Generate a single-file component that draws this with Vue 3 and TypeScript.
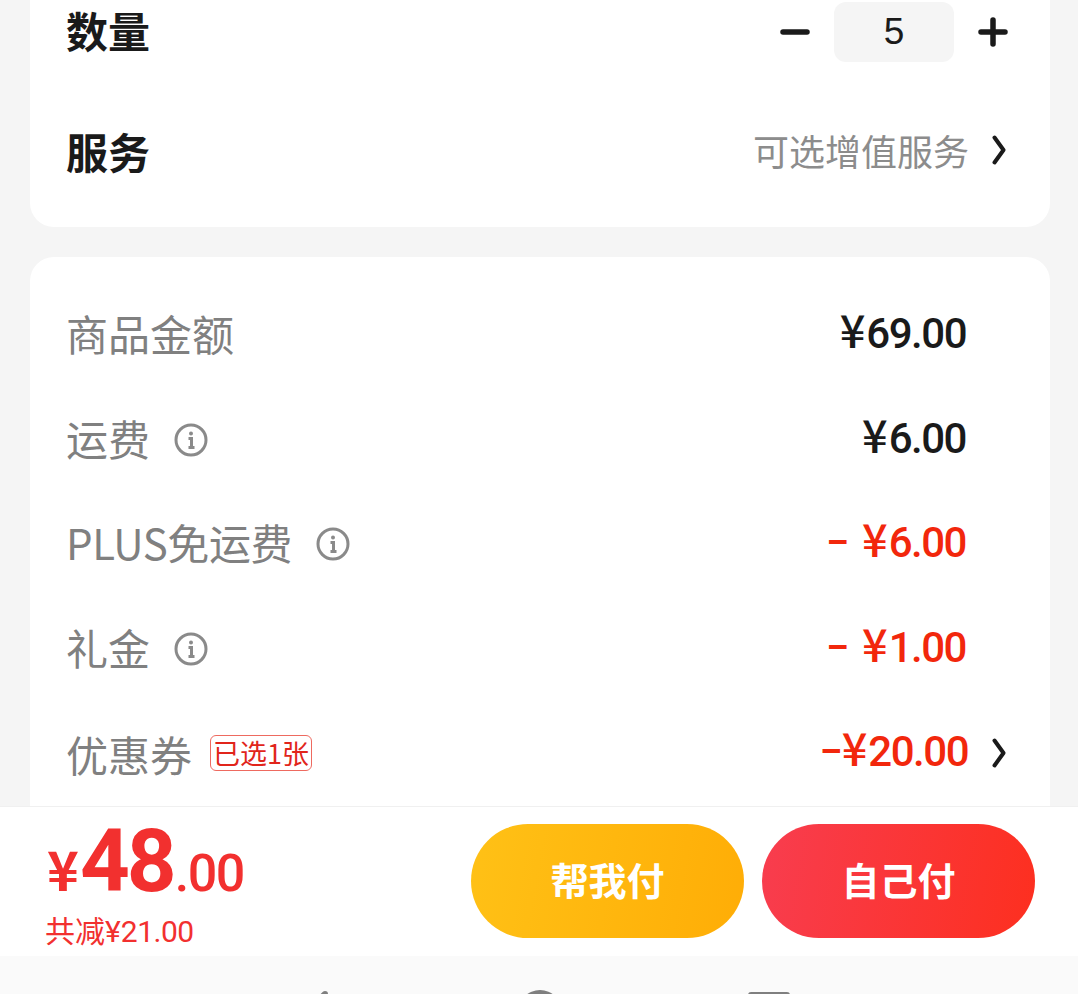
<script setup lang="ts">
interface FeeRow {
  label: string
  value: string
  info?: boolean
  discount?: boolean
  compact?: boolean
}

const fees: FeeRow[] = [
  { label: '商品金额', value: '69.00' },
  { label: '运费', value: '6.00', info: true },
  { label: 'PLUS免运费', value: '6.00', info: true, discount: true, compact: true },
  { label: '礼金', value: '1.00', info: true, discount: true },
]
</script>

<template>
  <div class="page">
    <div class="scroll">
      <section class="card card-top">
        <div class="row-qty">
          <span class="title">数量</span>
          <div class="stepper">
            <svg class="step-icon" viewBox="0 0 30 30"><path d="M3 15H27" /></svg>
            <div class="count">5</div>
            <svg class="step-icon" viewBox="0 0 30 30"><path d="M3 15H27M15 3V27" /></svg>
          </div>
        </div>
        <div class="row-service">
          <span class="title">服务</span>
          <div class="service-right">
            <span class="hint">可选增值服务</span>
            <svg class="chevron" viewBox="0 0 14 30"><path d="M2.5 2.5L11.5 15L2.5 27.5" /></svg>
          </div>
        </div>
      </section>

      <section class="card card-fees">
        <div v-for="fee in fees" :key="fee.label" class="fee-row">
          <div class="fee-left">
            <span class="label" :class="{ compact: fee.compact }">{{ fee.label }}</span>
            <svg v-if="fee.info" class="info" viewBox="0 0 34 34">
              <circle cx="17" cy="17" r="15" />
              <circle class="dot" cx="17" cy="10.5" r="2" />
              <path d="M14.5 15.5H17.5V24M14.5 24.5H20.5" />
            </svg>
          </div>
          <span class="amount" :class="{ discount: fee.discount }">
            <span v-if="fee.discount" class="sign spaced">−</span><span class="amount-yen">¥</span>{{ fee.value }}
          </span>
        </div>
        <div class="fee-row coupon-row">
          <div class="fee-left">
            <span class="label">优惠券</span>
            <span class="badge">已选1张</span>
          </div>
          <div class="coupon-right">
            <span class="amount discount"><span class="sign">−</span><span class="amount-yen">¥</span>20.00</span>
            <svg class="chevron" viewBox="0 0 14 30"><path d="M2.5 2.5L11.5 15L2.5 27.5" /></svg>
          </div>
        </div>
      </section>
    </div>

    <footer class="pay-bar">
      <div class="total">
        <div class="price">
          <span class="yen">¥</span><span class="int">48</span><span class="dec">.00</span>
        </div>
        <div class="saved">共减¥<span class="saved-num">21.00</span></div>
      </div>
      <div class="actions">
        <button class="btn btn-yellow"><span>帮我付</span></button>
        <button class="btn btn-red"><span>自己付</span></button>
      </div>
    </footer>

    <nav class="sys-nav">
      <svg class="nav-back" viewBox="0 0 44 44"><path d="M25 4L6 22L25 40Z" /></svg>
      <svg class="nav-home" viewBox="0 0 44 44"><circle cx="22" cy="22" r="22" /></svg>
      <svg class="nav-recent" viewBox="0 0 44 44"><rect x="1" y="2" width="42" height="42" rx="3" /></svg>
    </nav>
  </div>
</template>

<style>
html,
body {
  margin: 0;
  overflow: hidden;
}
</style>

<style scoped>
.page {
  width: 1078px;
  height: 994px;
  display: flex;
  flex-direction: column;
  overflow: hidden;
  background: #f5f5f5;
  font-family: "Noto Sans CJK SC", "Noto Sans", sans-serif;
}

.scroll {
  flex: 1;
  min-height: 0;
  overflow: hidden;
  padding: 0 28px 0 30px;
  display: flex;
  flex-direction: column;
  gap: 30px;
}

.card {
  background: #fff;
  flex-shrink: 0;
}

.card-top {
  height: 227px;
  padding: 0 42px 0 36px;
  box-sizing: border-box;
  border-radius: 0 0 24px 24px;
}

.row-qty {
  height: 64px;
  display: flex;
  align-items: center;
  justify-content: space-between;
}

.row-service {
  height: 66px;
  margin-top: 56px;
  display: flex;
  align-items: center;
  justify-content: space-between;
}

.title {
  font-size: 42px;
  font-weight: 700;
  color: #1a1a1a;
  padding-bottom: 6px;
}

.stepper {
  display: flex;
  align-items: center;
  gap: 24px;
}

.step-icon {
  width: 30px;
  height: 30px;
  fill: none;
  stroke: #1a1a1a;
  stroke-width: 5.5;
  stroke-linecap: round;
}

.count {
  width: 120px;
  height: 60px;
  border-radius: 12px;
  background: #f5f5f5;
  display: flex;
  align-items: center;
  justify-content: center;
  font-family: "Liberation Sans", Arial, sans-serif;
  font-size: 37px;
  color: #1a1a1a;
}

.service-right {
  display: flex;
  align-items: center;
  gap: 23px;
  padding-bottom: 6px;
}

.hint {
  font-size: 36px;
  color: #8c8c8c;
}

.chevron {
  width: 14px;
  height: 30px;
  margin-right: 2px;
  fill: none;
  stroke: #1a1a1a;
  stroke-width: 4;
  stroke-linecap: round;
  stroke-linejoin: round;
}

.card-fees {
  padding: 26px 42px 0 36px;
  border-radius: 24px 24px 0 0;
}

.fee-row {
  height: 104.5px;
  display: flex;
  align-items: center;
  justify-content: space-between;
  padding-right: 42px;
}

.coupon-row {
  padding-right: 0;
}

.fee-left {
  display: flex;
  align-items: center;
}

.label {
  font-size: 42px;
  color: #808080;
  padding-bottom: 5px;
}

.label.compact {
  letter-spacing: -0.4px;
}

.coupon-row .label {
  padding-bottom: 0;
}

.info {
  width: 34px;
  height: 34px;
  margin-left: 24px;
  fill: none;
  stroke: #8a8a8a;
  stroke-width: 3;
}

.info .dot {
  fill: #8a8a8a;
  stroke: none;
}

.amount {
  font-family: Roboto, sans-serif;
  font-size: 42px;
  line-height: 48px;
  font-weight: 500;
  letter-spacing: -1.5px;
  color: #1a1a1a;
  padding-bottom: 6px;
}

.amount.discount {
  color: #f2270c;
}

.amount-yen {
  font-family: "Noto Sans CJK SC", sans-serif;
  font-size: 45px;
  line-height: 1;
  letter-spacing: 0;
  margin-right: 1px;
}

.sign.spaced {
  margin-right: 14px;
}

.badge {
  margin-left: 18px;
  height: 36px;
  padding: 0 2px;
  box-sizing: border-box;
  border: 1px solid #ee6a60;
  border-radius: 6px;
  font-size: 27px;
  line-height: 33px;
  color: #e1251b;
}

.coupon-right {
  display: flex;
  align-items: center;
  gap: 24px;
}

.pay-bar {
  height: 150px;
  box-sizing: border-box;
  flex-shrink: 0;
  background: #fff;
  border-top: 1px solid #f0f0f0;
  padding: 0 43px 2px 46px;
  display: flex;
  align-items: center;
  justify-content: space-between;
}

.total {
  align-self: flex-start;
  margin-top: 10px;
}

.price {
  height: 88px;
  color: #f2302f;
  font-family: Roboto, sans-serif;
  font-weight: 500;
  line-height: 88px;
  white-space: nowrap;
}

.yen {
  font-family: "Noto Sans CJK SC", sans-serif;
  font-size: 54px;
  font-weight: 700;
  line-height: 1;
  margin: 0 1px 0 1px;
}

.int {
  font-size: 87px;
  font-weight: 700;
  letter-spacing: -3px;
}

.dec {
  font-size: 52px;
  letter-spacing: -1.5px;
  margin-left: 1px;
}

.saved {
  margin: 10px 0 0 -1px;
  font-family: Roboto, "Noto Sans CJK SC", sans-serif;
  font-size: 30px;
  line-height: 34px;
  color: #f2302f;
}

.saved-num {
  letter-spacing: -0.5px;
}

.actions {
  display: flex;
  gap: 18px;
}

.btn {
  width: 273px;
  height: 114px;
  border: none;
  border-radius: 57px;
  padding: 0 0 5px;
  color: #fff;
  font-family: inherit;
  font-size: 38px;
  font-weight: 700;
}

.btn-yellow {
  background: linear-gradient(100deg, #ffc116, #ffad06);
}

.btn-red {
  background: linear-gradient(100deg, #f83d4f, #fd2f1f);
}

.sys-nav {
  height: 38px;
  box-sizing: border-box;
  flex-shrink: 0;
  background: #fafafa;
  display: flex;
  align-items: flex-start;
  padding: 34px 0 0 300px;
  overflow: hidden;
}

.sys-nav svg {
  width: 44px;
  height: 44px;
  fill: #7f7f7f;
  flex-shrink: 0;
}

.nav-back path {
  stroke: #7f7f7f;
  stroke-width: 6;
  stroke-linejoin: round;
}

.nav-home {
  margin-left: 174px;
}

.nav-recent {
  margin-left: 185px;
}
</style>
